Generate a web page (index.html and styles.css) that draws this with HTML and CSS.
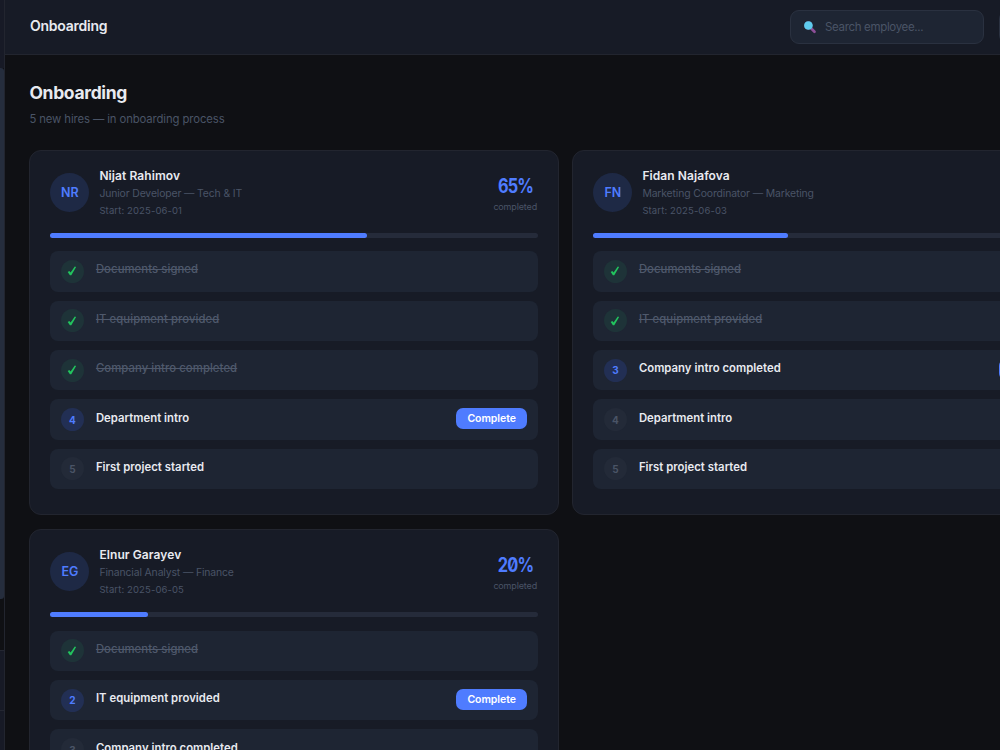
FILE: index.html
```html
<!DOCTYPE html>
<html lang="en">
<head>
<meta charset="utf-8">
<title>Onboarding</title>
<link rel="stylesheet" href="styles.css">
</head>
<body>
<div class="app">
  <aside class="sidebar"><div class="thumb"></div><div class="side-foot"></div></aside>
  <div class="main">
    <header class="topbar">
      <div class="topbar-title">Onboarding</div>
      <div class="search">
        <svg class="search-icon" width="14" height="14" viewBox="0 0 14 14"><path d="M8.3 8.5l3.2 3.2" stroke="#8d4f98" stroke-width="2.7" stroke-linecap="round"/><circle cx="5.4" cy="5.5" r="4.4" fill="#5b83a8"/><circle cx="5.4" cy="5.5" r="4.1" fill="#5ecbee"/></svg>
        <span>Search employee...</span>
      </div>
      <div class="icon-button"></div>
    </header>
    <main class="content">
      <h1>Onboarding</h1>
      <p class="subtitle">5 new hires — in onboarding process</p>
      <div class="grid">
        <section class="card">
          <div class="head"><div class="avatar">NR</div><div class="person"><div class="name">Nijat Rahimov</div><div class="role">Junior Developer — Tech &amp; IT</div><div class="start">Start: 2025-06-01</div></div><div class="score"><div class="percent">65%</div><div class="caption">completed</div></div></div>
          <div class="progress"><div class="fill" style="width:65%"></div></div>
          <ul class="steps">
            <li class="step done"><span class="dot"><svg width="10" height="10" viewBox="0 0 10 10"><path d="M.7 6.1L2.3 4.9L3.6 6.5L7.8.6L9.1 1.1L4.3 9.2L2.9 9.2Z"/></svg></span><span class="label">Documents signed</span></li>
            <li class="step done"><span class="dot"><svg width="10" height="10" viewBox="0 0 10 10"><path d="M.7 6.1L2.3 4.9L3.6 6.5L7.8.6L9.1 1.1L4.3 9.2L2.9 9.2Z"/></svg></span><span class="label">IT equipment provided</span></li>
            <li class="step done"><span class="dot"><svg width="10" height="10" viewBox="0 0 10 10"><path d="M.7 6.1L2.3 4.9L3.6 6.5L7.8.6L9.1 1.1L4.3 9.2L2.9 9.2Z"/></svg></span><span class="label">Company intro completed</span></li>
            <li class="step current"><span class="dot">4</span><span class="label">Department intro</span><button class="complete">Complete</button></li>
            <li class="step"><span class="dot">5</span><span class="label">First project started</span></li>
          </ul>
        </section>
        <section class="card">
          <div class="head"><div class="avatar">FN</div><div class="person"><div class="name">Fidan Najafova</div><div class="role">Marketing Coordinator — Marketing</div><div class="start">Start: 2025-06-03</div></div></div>
          <div class="progress"><div class="fill" style="width:40%"></div></div>
          <ul class="steps">
            <li class="step done"><span class="dot"><svg width="10" height="10" viewBox="0 0 10 10"><path d="M.7 6.1L2.3 4.9L3.6 6.5L7.8.6L9.1 1.1L4.3 9.2L2.9 9.2Z"/></svg></span><span class="label">Documents signed</span></li>
            <li class="step done"><span class="dot"><svg width="10" height="10" viewBox="0 0 10 10"><path d="M.7 6.1L2.3 4.9L3.6 6.5L7.8.6L9.1 1.1L4.3 9.2L2.9 9.2Z"/></svg></span><span class="label">IT equipment provided</span></li>
            <li class="step current"><span class="dot">3</span><span class="label">Company intro completed</span><button class="complete"></button></li>
            <li class="step"><span class="dot">4</span><span class="label">Department intro</span></li>
            <li class="step"><span class="dot">5</span><span class="label">First project started</span></li>
          </ul>
        </section>
        <section class="card">
          <div class="head"><div class="avatar">EG</div><div class="person"><div class="name">Elnur Garayev</div><div class="role">Financial Analyst — Finance</div><div class="start">Start: 2025-06-05</div></div><div class="score"><div class="percent">20%</div><div class="caption">completed</div></div></div>
          <div class="progress"><div class="fill" style="width:20%"></div></div>
          <ul class="steps">
            <li class="step done"><span class="dot"><svg width="10" height="10" viewBox="0 0 10 10"><path d="M.7 6.1L2.3 4.9L3.6 6.5L7.8.6L9.1 1.1L4.3 9.2L2.9 9.2Z"/></svg></span><span class="label">Documents signed</span></li>
            <li class="step current"><span class="dot">2</span><span class="label">IT equipment provided</span><button class="complete">Complete</button></li>
            <li class="step"><span class="dot">3</span><span class="label">Company intro completed</span></li>
          </ul>
        </section>
      </div>
    </main>
  </div>
</div>
</body>
</html>
```

FILE: styles.css
```css
* { box-sizing: border-box; }
body { margin: 0; background: #0f1014; color: #e8eaf0; font-family: Inter, "Liberation Sans", sans-serif; overflow: hidden; }
.app { display: flex; width: 100%; height: 750px; overflow: hidden; }
.sidebar { flex: none; width: 5px; height: 750px; padding-top: 68px; border-right: 1px solid #22252f; background: linear-gradient(#171a26 68px, #0f1014 68px); }
.thumb { height: 531px; background: #252d3d; border-top-right-radius: 3px; border-bottom-right-radius: 3px; }
.side-foot { height: 61px; margin-top: 51px; border-top: 1px solid #242732; border-bottom: 1px solid #242732; background: #171a26; box-shadow: 0 40px #171a26; }
.main { flex: none; width: 1122px; }
.topbar { display: flex; align-items: center; height: 55px; padding: 0 0 1px 25px; background: #171b26; border-bottom: 1px solid #22252f; }
.topbar-title { width: 759.5px; margin-top: -1px; font-size: 14px; font-weight: 600; letter-spacing: -.25px; line-height: 20px; }
.search { display: flex; align-items: center; flex: none; width: 194px; height: 34px; padding-left: 12.5px; border: 1px solid #2a3140; border-radius: 9px; background: #1e2533; color: #4a5466; font-size: 11.5px; letter-spacing: -.33px; }
.search-icon { margin-right: 8px; }
.icon-button { flex: none; width: 34px; height: 34px; margin-left: 15px; border: 1px solid #2a3140; border-radius: 9px; background: #1e2533; }
.content { padding: 26px 0 0 24.4px; }
h1 { margin: 0; font-size: 17.5px; font-weight: 700; line-height: 24px; letter-spacing: -.32px; }
.subtitle { margin: 5px 0 0; font-size: 11.3px; line-height: 18px; letter-spacing: -.1px; color: #4a5466; }
.grid { display: grid; grid-template-columns: 529.3px 529.3px; gap: 13.7px; margin-top: 21.7px; }
.card { height: 365.8px; padding: 18px 20px; border: 1px solid #22252f; border-radius: 12px; background: #171b26; }
.head { display: flex; height: 46px; }
.avatar { display: flex; align-items: center; justify-content: center; flex: none; width: 39px; height: 39px; margin: 4px 10px 0 0; border-radius: 50%; background: #1e2945; color: #4f7cff; font-size: 12.5px; font-weight: 600; }
.person { flex: 1; margin-top: -2px; }
.name { font-size: 12px; font-weight: 600; line-height: 18px; letter-spacing: .08px; }
.role { font-size: 10.4px; line-height: 18px; letter-spacing: -.13px; color: #4a5466; }
.start { font-size: 9.5px; line-height: 15px; letter-spacing: .12px; color: #4a5466; }
.score { width: 45px; text-align: center; }
.percent { margin-top: 6px; font-size: 19.5px; font-weight: 700; line-height: 22px; letter-spacing: -1px; font-feature-settings: "zero"; color: #4f7cff; transform: scaleX(.84); }
.caption { margin-top: 3px; font-size: 9px; line-height: 14px; letter-spacing: -.15px; color: #4a5466; }
.progress { height: 5px; margin-top: 18px; border-radius: 3px; background: #252b3a; }
.fill { height: 5px; border-radius: 3px; background: #4f7cff; }
.steps { display: grid; gap: 9px; margin: 13.5px 0 0; padding: 0; list-style: none; }
.step { display: flex; align-items: center; height: 40.4px; padding: 0 10.5px; border-radius: 8px; background: #1e2533; }
.dot { display: flex; align-items: center; justify-content: center; width: 23px; height: 23px; border-radius: 50%; background: #232a38; color: #4a5466; font-size: 10px; font-weight: 700; }
.label { flex: 1; margin: -4px 0 0 12px; font-size: 11.3px; font-weight: 600; line-height: 18px; letter-spacing: .04px; }
.done .dot { background: #1e3338; }
.done .dot path { fill: #22c55e; }
.done .label { color: #4f596c; font-weight: 500; letter-spacing: .08px; text-decoration: line-through; }
.current .dot { background: #222f54; color: #4f7cff; }
.complete { width: 71px; height: 21px; margin: -2px 0 0; padding: 0; border: 0; border-radius: 7px; background: #4f7cff; color: #fff; font: 600 10.5px/21px Inter, sans-serif; letter-spacing: -.05px; }
```
